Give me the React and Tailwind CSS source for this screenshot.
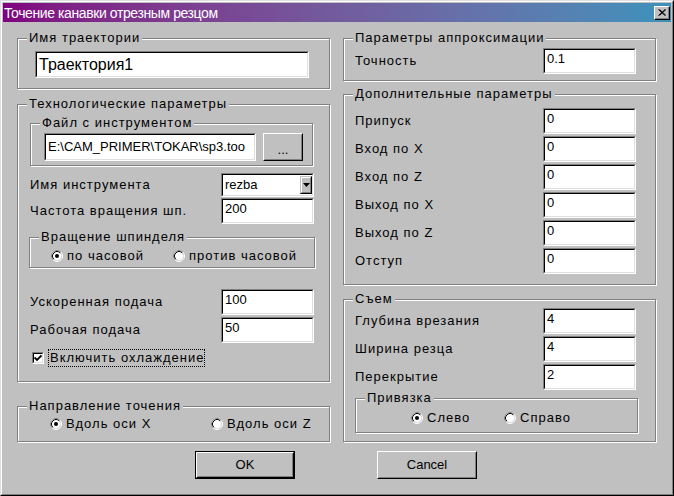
import React from "react";

const lbl = "text-[13px] leading-[16px] tracking-[1px] text-black whitespace-nowrap";

function Group({ label, className = "", children }) {
  return (
    <div
      className={`flex flex-col border border-[#808080] shadow-[inset_1px_1px_0_#fff,1px_1px_0_#fff] ${className}`}
    >
      <span className={`-mt-[9px] ml-[9px] self-start bg-[#c0c0c0] px-[2px] ${lbl}`}>
        {label}
      </span>
      {children}
    </div>
  );
}

function Field({ value, className = "", textClass = "text-[13px] leading-[16px] pt-[1px]" }) {
  return (
    <div
      className={`border border-t-[#808080] border-l-[#808080] border-r-white border-b-white ${className}`}
    >
      <div
        className={`h-full overflow-hidden whitespace-nowrap border border-t-black border-l-black border-r-[#dfdfdf] border-b-[#dfdfdf] bg-white pl-[2px] text-black ${textClass}`}
      >
        {value}
      </div>
    </div>
  );
}

function Button({ children, className = "", isDefault = false }) {
  const body = (
    <div className="h-full border border-t-white border-l-white border-r-black border-b-black">
      <div className="flex h-full items-center justify-center border border-t-[#c0c0c0] border-l-[#c0c0c0] border-r-[#808080] border-b-[#808080] text-[13px] text-black">
        {children}
      </div>
    </div>
  );
  if (isDefault) {
    return <div className={`border border-black ${className}`}>{body}</div>;
  }
  return <div className={className}>{body}</div>;
}

function Radio({ checked }) {
  return (
    <svg width="12" height="12" viewBox="0 0 12 12" className="shrink-0">
      <circle cx="6" cy="6" r="5.5" fill="none" stroke="#fff" />
      <path d="M2.11 9.89 A5.5 5.5 0 0 1 9.89 2.11" fill="none" stroke="#808080" />
      <circle cx="6" cy="6" r="4.5" fill="#fff" stroke="#dfdfdf" />
      <path d="M2.82 9.18 A4.5 4.5 0 0 1 9.18 2.82" fill="none" stroke="#000" />
      {checked && <circle cx="6" cy="6" r="2" fill="#000" />}
    </svg>
  );
}

function RadioItem({ checked, text, className = "" }) {
  return (
    <div className={`flex items-center ${className}`}>
      <Radio checked={checked} />
      <span className={`ml-[4px] ${lbl}`}>{text}</span>
    </div>
  );
}

function Row({ label, value, labelW, className = "" }) {
  return (
    <div className={`flex h-[28px] items-center ${className}`}>
      <span className={`${lbl}`} style={{ width: labelW }}>
        {label}
      </span>
      <Field value={value} className="h-[26px] w-[93px]" />
    </div>
  );
}

export default function App() {
  return (
    <div className="h-[496px] w-[674px] border border-t-[#dfdfdf] border-l-[#dfdfdf] border-r-black border-b-black bg-[#c0c0c0] font-['Liberation_Sans',Arial,sans-serif]">
      <div className="flex h-full flex-col border border-t-white border-l-white border-r-[#808080] border-b-[#808080] p-[1px]">
        {/* заголовок окна */}
        <div className="flex h-[19px] items-center bg-linear-to-r from-[#800080] to-[#3a92bc] pl-[1px]">
          <span className="text-[14px] leading-[16px] tracking-[-0.4px] text-white whitespace-nowrap">
            Точение канавки отрезным резцом
          </span>
          <div className="ml-auto mr-[1px] h-[14px] w-[16px] border border-t-white border-l-white border-r-black border-b-black bg-[#c0c0c0]">
            <div className="flex h-full items-center justify-center border-r border-b border-[#808080]">
              <svg width="8" height="7" viewBox="0 0 8 7">
                <path d="M0.5 0.5 L7 6.5 M1.5 0.5 L8 6.5 M7 0.5 L0.5 6.5 M8 0.5 L1.5 6.5" stroke="#000" strokeWidth="1" />
              </svg>
            </div>
          </div>
        </div>

        <div className="ml-[14px] mt-[16px] flex gap-[13px]">
          {/* левая колонка */}
          <div className="flex w-[313px] flex-col">
            <Group label="Имя траектории" className="h-[51px]">
              <Field
                value="Траектория1"
                className="ml-[17px] mt-[5px] h-[27px] w-[274px]"
                textClass="text-[16px] leading-[18px] pt-[3px]"
              />
            </Group>

            <Group label="Технологические параметры" className="mt-[15px] h-[278px]">
              <Group label="Файл с инструментом" className="ml-[12px] mt-[11px] h-[43px] w-[283px]">
                <div className="ml-[13px] mt-[2px] flex">
                  <Field
                    value="E:\CAM_PRIMER\TOKAR\sp3.too"
                    className="h-[28px] w-[212px]"
                    textClass="text-[13px] leading-[16px] pt-[4px]"
                  />
                  <Button className="ml-[7px] h-[28px] w-[40px]">
                    <span className="mt-[6px]">...</span>
                  </Button>
                </div>
              </Group>

              <div className="ml-[12px] mt-[7px] flex h-[24px] items-center">
                <span className={`w-[191px] ${lbl}`}>Имя инструмента</span>
                <div className="h-[24px] w-[93px] border border-t-[#808080] border-l-[#808080] border-r-white border-b-white">
                  <div className="flex h-full border border-t-black border-l-black border-r-[#dfdfdf] border-b-[#dfdfdf] bg-white">
                    <span className="pl-[2px] pt-[2px] text-[13px] leading-[16px] text-black">rezba</span>
                    <div className="ml-auto mt-[1px] h-[18px] w-[12px] border border-t-[#c0c0c0] border-l-[#c0c0c0] border-r-black border-b-black bg-[#c0c0c0]">
                      <div className="flex h-full items-center justify-center border border-t-white border-l-white border-r-[#808080] border-b-[#808080]">
                        <svg width="7" height="4" viewBox="0 0 7 4">
                          <path d="M0 0 H7 L3.5 4 Z" fill="#000" />
                        </svg>
                      </div>
                    </div>
                  </div>
                </div>
              </div>

              <div className="ml-[12px] mt-[1px] flex h-[26px] items-center">
                <span className={`w-[191px] ${lbl}`}>Частота вращения шп.</span>
                <Field value="200" className="h-[26px] w-[93px]" />
              </div>

              <Group label="Вращение шпинделя" className="ml-[11px] mt-[13px] h-[31px] w-[286px]">
                <div className="ml-[21px] mt-[5px] flex h-[12px]">
                  <RadioItem checked text="по часовой" className="w-[122px]" />
                  <RadioItem text="против часовой" />
                </div>
              </Group>

              <div className="ml-[12px] mt-[21px] flex h-[26px] items-center">
                <span className={`w-[191px] ${lbl}`}>Ускоренная подача</span>
                <Field value="100" className="h-[26px] w-[93px]" />
              </div>
              <div className="ml-[12px] mt-[2px] flex h-[26px] items-center">
                <span className={`w-[191px] ${lbl}`}>Рабочая подача</span>
                <Field value="50" className="h-[26px] w-[93px]" />
              </div>

              <div className="ml-[14px] mt-[6px] flex h-[18px] items-center">
                <div className="h-[12px] w-[12px] border border-t-[#808080] border-l-[#808080] border-r-white border-b-white">
                  <div className="flex h-full items-center justify-center border border-t-black border-l-black border-r-[#dfdfdf] border-b-[#dfdfdf] bg-white">
                    <svg width="8" height="8" viewBox="0 0 8 8">
                      <path d="M0.5 3.5 L3 6 L7.5 1.5" fill="none" stroke="#000" strokeWidth="1.8" />
                    </svg>
                  </div>
                </div>
                <div className="ml-[4px] flex h-[18px] w-[157px] items-center border border-dotted border-black pl-[1px]">
                  <span className={lbl}>Включить охлаждение</span>
                </div>
              </div>
            </Group>

            <Group label="Направление точения" className="mt-[24px] h-[36px]">
              <div className="ml-[32px] mt-[4px] flex h-[12px]">
                <RadioItem checked text="Вдоль оси X" className="w-[161px]" />
                <RadioItem text="Вдоль оси Z" />
              </div>
            </Group>
          </div>

          {/* правая колонка */}
          <div className="flex w-[313px] flex-col">
            <Group label="Параметры аппроксимации" className="h-[43px]">
              <div className="ml-[11px] mt-[2px] flex h-[26px] items-center">
                <span className={`w-[188px] ${lbl}`}>Точность</span>
                <Field value="0.1" className="h-[26px] w-[93px]" />
              </div>
            </Group>

            <Group label="Дополнительные параметры" className="mt-[13px] h-[191px]">
              <div className="ml-[11px] mt-[5px] flex flex-col">
                <Row label="Припуск" value="0" labelW={188} />
                <Row label="Вход по X" value="0" labelW={188} />
                <Row label="Вход по Z" value="0" labelW={188} />
                <Row label="Выход по X" value="0" labelW={188} />
                <Row label="Выход по Z" value="0" labelW={188} />
                <Row label="Отступ" value="0" labelW={188} />
              </div>
            </Group>

            <Group label="Съем" className="mt-[14px] h-[143px]">
              <div className="ml-[11px] flex flex-col">
                <Row label="Глубина врезания" value="4" labelW={188} />
                <Row label="Ширина резца" value="4" labelW={188} />
                <Row label="Перекрытие" value="2" labelW={188} />
              </div>
              <Group label="Привязка" className="ml-[11px] mt-[7px] h-[35px] w-[283px]">
                <div className="ml-[55px] mt-[6px] flex h-[12px]">
                  <RadioItem checked text="Слево" className="w-[93px]" />
                  <RadioItem text="Справо" />
                </div>
              </Group>
            </Group>
          </div>
        </div>

        <div className="mt-[9px] flex">
          <Button isDefault className="ml-[192px] h-[28px] w-[100px]">
            OK
          </Button>
          <Button className="ml-[82px] h-[28px] w-[100px]">Cancel</Button>
        </div>
      </div>
    </div>
  );
}
